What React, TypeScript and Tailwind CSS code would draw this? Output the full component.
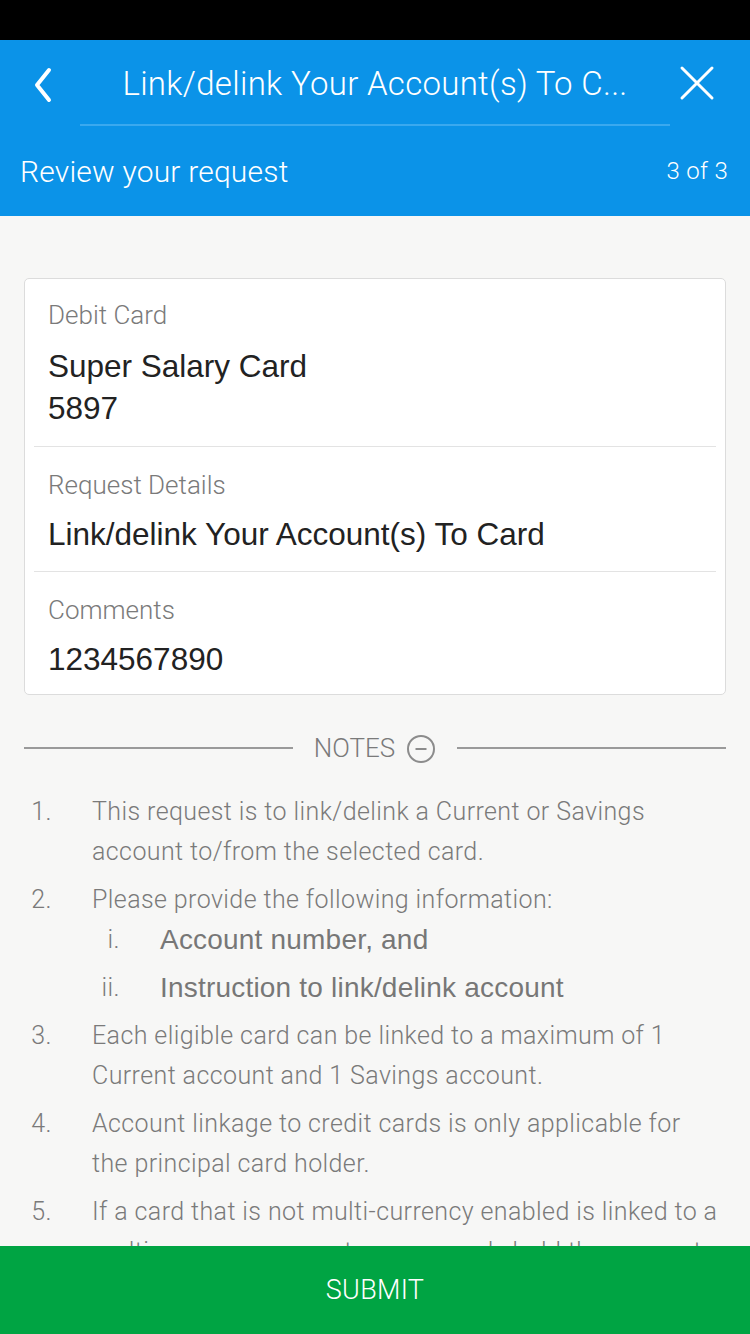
import React from "react";

const roboto = { fontFamily: "Roboto, 'Liberation Sans', sans-serif" };
const arial = { fontFamily: "'Liberation Sans', Arial, sans-serif" };

function Label({ children }: { children: React.ReactNode }) {
  return <div className="text-[26px] font-light leading-[30px] text-[#7a7a7a]">{children}</div>;
}

function NoteItem({ n, lines, wrap }: { n: string; lines: string[]; wrap?: boolean }) {
  return (
    <li className="flex">
      <span className="w-[28px] shrink-0 text-right">{n}</span>
      <div className={"ml-[40px] flex-1 " + (wrap ? "" : "whitespace-nowrap")}>
        {lines.map((l, i) => (
          <div key={i}>{l}</div>
        ))}
      </div>
    </li>
  );
}

function SubItem({ n, text }: { n: string; text: string }) {
  return (
    <li className="flex">
      <span className="w-[96px] shrink-0 text-right font-light" style={roboto}>{n}</span>
      <span className="ml-[40px] whitespace-nowrap text-[28px] tracking-[0.2px] text-[#777]" style={arial}>
        {text}
      </span>
    </li>
  );
}

export default function App() {
  return (
    <div className="flex h-[1334px] w-[750px] flex-col overflow-hidden bg-[#f7f7f6]" style={roboto}>
      <div className="h-[40px] shrink-0 bg-black" />
      <div className="shrink-0 bg-[#0b93e8] text-white">
        <div className="flex h-[86px] items-center">
          <div className="flex w-[80px] justify-center pl-[6px] pt-[3px]">
            <svg width="24" height="36" viewBox="0 0 24 36" fill="none">
              <path d="M18 3 L6 18 L18 33" stroke="white" strokeWidth="4" strokeLinecap="round" strokeLinejoin="round" />
            </svg>
          </div>
          <div className="flex h-full flex-1 items-center justify-center border-b-2 border-[#3aa9ef] pt-[4px]">
            <span className="text-[33px] font-light tracking-[0.3px]">Link/delink Your Account(s) To C...</span>
          </div>
          <div className="flex w-[80px] justify-start pl-[9px]">
            <svg width="36" height="36" viewBox="0 0 36 36" fill="none">
              <path d="M3 3 L33 33 M33 3 L3 33" stroke="white" strokeWidth="3" strokeLinecap="round" />
            </svg>
          </div>
        </div>
        <div className="flex h-[90px] items-center justify-between px-[20px]">
          <span className="text-[30px] font-light tracking-[0.2px]">Review your request</span>
          <span className="pr-[2px] text-[24px] font-light tracking-[0.3px]">3 of 3</span>
        </div>
      </div>

      <div className="flex-1 overflow-hidden px-[24px] pt-[62px]">
        <div className="rounded-[5px] border border-[#dcdcdc] bg-white px-[9px]">
          <div className="border-b border-[#e3e3e3] px-[14px] pb-[17px] pt-[21px]">
            <Label>Debit Card</Label>
            <div className="mt-[15px] text-[31.5px] leading-[42px] text-[#222]" style={arial}>
              <div>Super Salary Card</div>
              <div>5897</div>
            </div>
          </div>
          <div className="border-b border-[#e3e3e3] px-[14px] pb-[16px] pt-[23px]">
            <Label>Request Details</Label>
            <div className="mt-[13px] text-[31.5px] leading-[42px] text-[#222]" style={arial}>
              Link/delink Your Account(s) To Card
            </div>
          </div>
          <div className="px-[14px] pb-[14px] pt-[23px]">
            <Label>Comments</Label>
            <div className="mt-[13px] text-[31.5px] leading-[42px] text-[#222]" style={arial}>
              1234567890
            </div>
          </div>
        </div>

        <div className="mt-[38px] flex h-[30px] items-center">
          <div className="h-[2px] flex-1 bg-[#9a9a9a]" />
          <div className="mx-[21px] flex items-center gap-[11px]">
            <span className="text-[26px] font-light leading-[30px] text-[#7a7a7a]">NOTES</span>
            <svg width="30" height="30" viewBox="0 0 30 30" fill="none" className="mt-[2px]">
              <circle cx="15" cy="15" r="13" stroke="#8c8c8c" strokeWidth="2" />
              <path d="M9.5 15 H20.5" stroke="#8c8c8c" strokeWidth="2" />
            </svg>
          </div>
          <div className="h-[2px] flex-1 bg-[#9a9a9a]" />
        </div>

        <ol className="mt-[29px] flex flex-col gap-[8px] text-[25px] font-light leading-[40px] tracking-[0.4px] text-[#7a7a7a]">
          <NoteItem n="1." lines={["This request is to link/delink a Current or Savings", "account to/from the selected card."]} />
          <li className="flex flex-col">
            <div className="flex">
              <span className="w-[28px] shrink-0 text-right">2.</span>
              <div className="ml-[40px] flex-1 whitespace-nowrap">Please provide the following information:</div>
            </div>
            <ol className="flex flex-col gap-[8px]">
              <SubItem n="i." text="Account number, and" />
              <SubItem n="ii." text="Instruction to link/delink account" />
            </ol>
          </li>
          <NoteItem n="3." lines={["Each eligible card can be linked to a maximum of 1", "Current account and 1 Savings account."]} />
          <NoteItem n="4." lines={["Account linkage to credit cards is only applicable for", "the principal card holder."]} />
          <NoteItem
            n="5."
            wrap
            lines={["If a card that is not multi-currency enabled is linked to a", "multi-currency account, you can only hold the account in SGD."]}
          />
        </ol>
      </div>

      <div className="flex h-[88px] shrink-0 items-center justify-center bg-[#00a443]">
        <span className="text-[27px] font-light tracking-[0.3px] text-white">SUBMIT</span>
      </div>
    </div>
  );
}
